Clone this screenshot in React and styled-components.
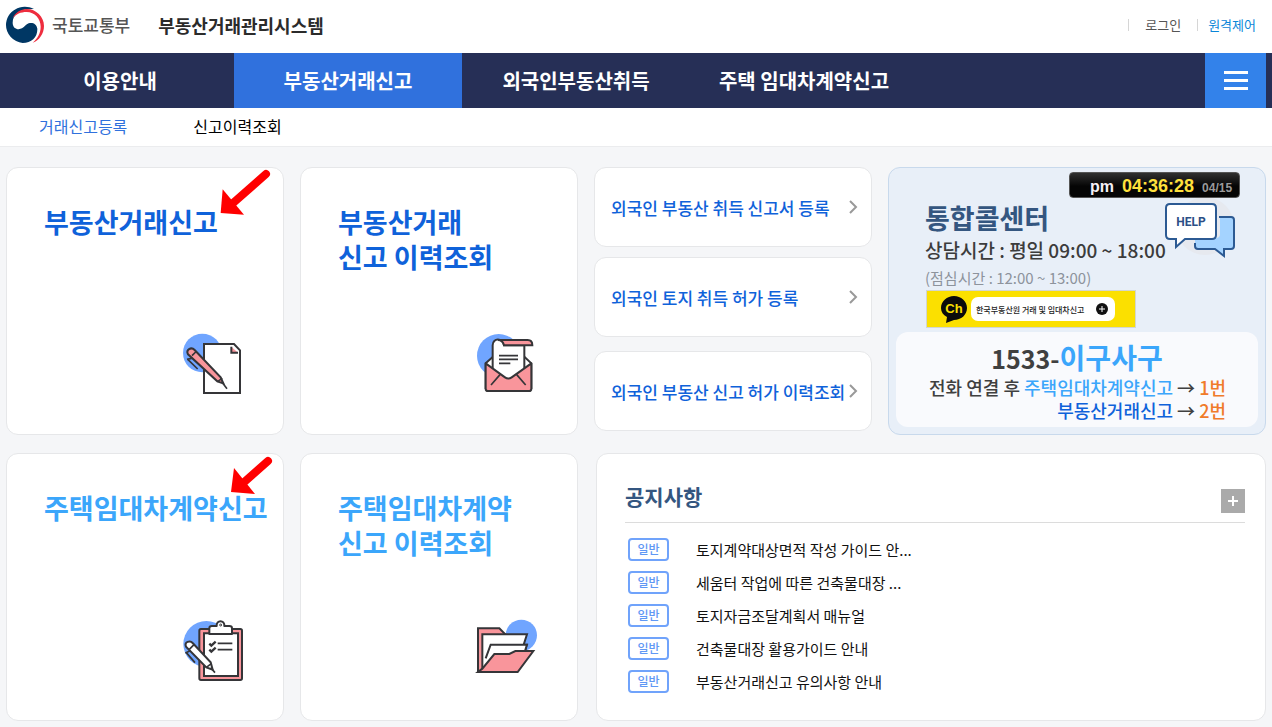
import React from "react";
import styled, { createGlobalStyle } from "styled-components";

const Global = createGlobalStyle`
  * { box-sizing: border-box; }
  body {
    margin: 0;
    background: #f5f6f8;
    color: #111;
    font-family: "Noto Sans CJK KR", "Noto Sans", sans-serif;
  }
  a { color: inherit; text-decoration: none; }
  h1, h2, p, ul { margin: 0; padding: 0; }
  ul { list-style: none; }
  button { border: 0; padding: 0; font: inherit; cursor: pointer; }
`;

const Header = styled.header`
  display: flex;
  align-items: center;
  height: 53px;
  padding: 0 16px 4px 5px;
  background: #fff;
`;
const Ministry = styled.a`
  display: flex;
  align-items: center;
  gap: 7px;
  color: #555;
  font-size: 17px;
  font-weight: 500;
  line-height: 24px;
`;
const SystemName = styled.h1`
  margin-left: 28px;
  color: #2b2b2b;
  font-size: 18px;
  font-weight: 700;
  line-height: 24px;
`;
const Utilities = styled.nav`
  display: flex;
  align-items: center;
  margin-left: auto;
`;
const Utility = styled.a`
  display: flex;
  align-items: center;
  color: ${(p) => (p.$accent ? "#0a86d8" : "#555")};
  font-size: 13px;
  line-height: 18px;
  & + & { margin-left: 16px; }
  &::before {
    content: "";
    height: 12px;
    margin-right: ${(p) => (p.$accent ? 10 : 16)}px;
    border-left: 1px solid #d6d6d6;
  }
`;

const MainNav = styled.nav`
  display: flex;
  height: 55px;
  padding: 0 6px;
  background: #262f56;
`;
const NavItem = styled.a`
  flex: 0 1 228px;
  display: flex;
  align-items: center;
  justify-content: center;
  background: ${(p) => (p.$active ? "#3071dd" : "transparent")};
  color: #fff;
  font-size: 20px;
  font-weight: 700;
  white-space: nowrap;
`;
const MenuButton = styled.button`
  display: flex;
  flex-direction: column;
  align-items: center;
  justify-content: center;
  gap: 5px;
  width: 61px;
  margin-left: auto;
  background: #3382ea;
`;
const MenuBar = styled.span`
  width: 24px;
  height: 3px;
  background: #fff;
`;
const SubNav = styled.nav`
  display: flex;
  align-items: center;
  gap: 66px;
  height: 39px;
  padding: 0 39px 2px;
  border-bottom: 1px solid #ebecee;
  background: #fff;
`;
const SubItem = styled.a`
  color: ${(p) => (p.$active ? "#3071dd" : "#000")};
  font-size: 16px;
  line-height: 24px;
`;

const Main = styled.main`
  display: grid;
  gap: 18px;
  padding: 20px 6px 6px;
`;
const TopRow = styled.div`
  display: grid;
  grid-template-columns: 278fr 278fr 278fr 378fr;
  gap: 16px;
  min-height: 268px;
`;
const BottomRow = styled.div`
  display: grid;
  grid-template-columns: 572fr 670fr;
  gap: 18px;
  min-height: 268px;
`;
const Pair = styled.div`
  display: grid;
  grid-template-columns: 1fr 1fr;
  gap: 16px;
`;

const Panel = styled.section`
  border: 1px solid #e6e7e9;
  border-radius: 12px;
  background: #fff;
`;
const Service = styled(Panel).attrs({ as: "a" })`
  position: relative;
  display: flex;
  flex-direction: column;
  justify-content: space-between;
  padding: 36px 0 38px 37px;
`;
const ServiceTitle = styled.h2`
  color: ${(p) => (p.$light ? "#3ba6fb" : "#0f62da")};
  font-size: 27px;
  font-weight: 700;
  line-height: 35px;
  white-space: nowrap;
`;
const ServiceIcon = styled.svg`
  align-self: flex-end;
  width: 64px;
  height: 64px;
  margin-right: 38px;
  fill: none;
  stroke: #353538;
  stroke-width: 6;
`;
const Pointer = styled.svg`
  position: absolute;
  left: ${(p) => p.$left}px;
  top: ${(p) => p.$top}px;
`;

const Links = styled.div`
  display: flex;
  flex-direction: column;
  gap: 14px;
`;
const LinkGroup = styled.div`
  display: flex;
  flex-direction: column;
  gap: 10px;
`;
const LinkCard = styled(Panel).attrs({ as: "a" })`
  display: flex;
  align-items: center;
  justify-content: space-between;
  height: 80px;
  padding: 0 13px 0 16px;
  color: #0f62da;
  font-size: 17px;
  font-weight: 500;
  white-space: nowrap;
`;

const CallCenter = styled(Panel)`
  position: relative;
  display: flex;
  flex-direction: column;
  padding: 33px 7px 7px;
  border-color: #c8d9ec;
  background: #e8eff8;
`;
const CallInfo = styled.div`
  padding-left: 29px;
`;
const CallTitle = styled.h2`
  color: #345680;
  font-size: 27px;
  font-weight: 700;
  line-height: 34px;
`;
const Hours = styled.p`
  color: #3c3c3c;
  font-size: 19px;
  font-weight: 500;
  line-height: 30px;
  white-space: nowrap;
`;
const Lunch = styled.p`
  color: #8d939c;
  font-size: 15px;
  font-weight: 400;
  line-height: 25px;
`;
const KakaoBanner = styled.a`
  display: flex;
  align-items: center;
  gap: 3px;
  width: 210px;
  height: 38px;
  margin-left: 1px;
  padding-left: 14px;
  border: 1px solid #d3d6cf;
  background: #fbe000;
`;
const KakaoLabel = styled.span`
  display: flex;
  align-items: center;
  justify-content: space-between;
  width: 144px;
  height: 24px;
  padding: 0 7px 0 5px;
  border-radius: 7px;
  background: #fff;
  color: #222;
  font-size: 8px;
  font-weight: 500;
  white-space: nowrap;
`;
const PhoneBox = styled.div`
  margin-top: 4px;
  padding: 7px 32px 5px;
  border-radius: 12px;
  background: #f9fafd;
  color: #404040;
`;
const Phone = styled.p`
  font-size: 25px;
  font-weight: 700;
  line-height: 36px;
  text-align: center;
`;
const PhoneWord = styled.span`
  color: #3ba6fb;
  font-size: 28px;
  line-height: 36px;
`;
const Extension = styled.p`
  font-size: 18px;
  font-weight: 500;
  line-height: 23px;
  text-align: right;
  white-space: nowrap;
`;
const Tone = styled.span`
  color: ${(p) => p.$color};
`;
const Clock = styled.div`
  position: absolute;
  top: 4px;
  right: 25px;
  display: flex;
  align-items: baseline;
  gap: 8px;
  width: 171px;
  height: 26px;
  padding-left: 20px;
  border: 1px solid #555;
  border-radius: 4px;
  background: linear-gradient(#303030, #050505 55%);
  color: #f4f0f4;
  font-family: "Liberation Sans", sans-serif;
  font-size: 16px;
  font-weight: 700;
  line-height: 26px;
`;
const Time = styled.span`
  color: #ffe13c;
  font-size: 18px;
`;
const Day = styled.span`
  color: #9a9a9a;
  font-size: 12px;
`;
const HelpIcon = styled.svg`
  position: absolute;
  top: 28px;
  right: 27px;
`;

const Notices = styled(Panel)`
  padding: 28px 20px 20px 28px;
`;
const NoticeHead = styled.div`
  display: flex;
  align-items: flex-end;
  justify-content: space-between;
  height: 41px;
  padding-bottom: 9px;
  border-bottom: 1px solid #dcdcdc;
`;
const NoticeTitle = styled.h2`
  color: #345680;
  font-size: 21px;
  font-weight: 700;
  line-height: 34px;
`;
const MoreButton = styled.button`
  display: grid;
  place-items: center;
  width: 24px;
  height: 24px;
  background: #aaa;
`;
const NoticeList = styled.ul`
  padding: 10px 0 0 3px;
`;
const Notice = styled.li`
  display: flex;
  align-items: center;
  gap: 27px;
  height: 33px;
  font-size: 15px;
`;
const Tag = styled.span`
  width: 41px;
  height: 23px;
  border: 2px solid #70a3fb;
  border-radius: 4px;
  color: #5f98f5;
  font-size: 12px;
  font-weight: 500;
  line-height: 18px;
  text-align: center;
`;

const PINK = "#f9959b";
const BLUE = "#70a5ff";

const Emblem = () => (
  <svg width="40" height="38" viewBox="15 18 120 114" aria-hidden="true">
    <path fill="#003764" d="M102 27A57 54 0 0 0 18 75A56 54 0 0 0 68 129C95 129 113 112 112 86C110 72 98 66 86 70C78 73 74 80 66 85C54 91 38 86 38 68C38 45 60 30 80 28Z" />
    <path fill="#ee2d3e" d="M38 55C45 38 62 27 80 27C108 27 132 50 132 78C132 100 118 122 98 128C112 116 122 100 122 80C122 56 104 36 80 36C62 36 48 42 38 55Z" />
  </svg>
);

const ContractIcon = () => (
  <ServiceIcon viewBox="33 36 192 192" aria-hidden="true">
    <circle cx="97" cy="99" r="58" fill={BLUE} stroke="none" />
    <path fill="#fff" d="M102 72H192L210 91V219H102Z" />
    <path fill={PINK} d="M184 80V98H204" />
    <path fill={PINK} d="M54 103C47 90 63 79 74 90L152 172L160 190L142 184Z" />
    <path d="M66 107L77 96M142 185L157 175M155 185L171 206M51 118L65 115M54 119L83 147" strokeWidth="5" />
  </ServiceIcon>
);

const LetterIcon = () => (
  <ServiceIcon viewBox="30 36 192 192" aria-hidden="true">
    <circle cx="101" cy="107" r="65" fill={BLUE} stroke="none" />
    <path fill="#fff" d="M62 130L84 110H178L199 130V204H62Z" />
    <path fill="#fff" d="M83 158V76C83 52 114 54 117 76H178V158L130 182Z" />
    <path fill={PINK} d="M99 60H188C198 60 202 67 202 76H117C115 67 109 60 99 60Z" />
    <path fill={PINK} strokeLinejoin="round" d="M62 130L120 172Q130 179 140 172L199 130V206Q199 213 192 213H69Q62 213 62 206Z" />
    <path d="M78 195L105 164M182 195L155 164M102 107H159M102 118H159M102 130H136" strokeWidth="5" />
  </ServiceIcon>
);

const ChecklistIcon = () => (
  <ServiceIcon viewBox="33 24 192 192" aria-hidden="true">
    <circle cx="109" cy="102" r="69" fill={BLUE} stroke="none" />
    <rect x="88" y="57" width="128" height="153" rx="5" fill={PINK} />
    <path fill="#fff" d="M102 70H204V198H102Z" />
    <path fill="#fff" strokeLinejoin="round" d="M118 72V55Q118 48 126 48H140C138 29 165 29 163 48H178Q186 48 186 55V72Z" />
    <circle cx="152" cy="45" r="3" strokeWidth="3" />
    <path d="M118 101L124 107L137 95M118 119L124 125L137 113" strokeWidth="7" />
    <path d="M143 100H187M143 119H187" strokeWidth="5" />
    <path fill="#fff" d="M48 110C42 96 60 90 68 99L122 157L128 179L109 172Z" />
    <path d="M58 118L72 104M109 172L124 161M122 173L135 188M46 129L61 122M49 128L75 158" strokeWidth="5" />
  </ServiceIcon>
);

const FolderIcon = () => (
  <ServiceIcon viewBox="30 24 192 192" aria-hidden="true">
    <circle cx="169" cy="76" r="47" fill={BLUE} stroke="none" />
    <path fill={PINK} d="M39 186V55H103L121 73V186Z" />
    <path fill="#fff" d="M52 176V73H186L176 104H185L178 130L100 176Z" />
    <path fill="#fff" d="M62 145L77 104H186L180 123L90 170" />
    <path fill={PINK} d="M39 186L52 176L88 132H133L151 123H205L158 186Z" />
  </ServiceIcon>
);

const Chevron = () => (
  <svg width="10" height="14" viewBox="0 0 10 14" fill="none" stroke="#999" strokeWidth="2" aria-hidden="true">
    <path d="M2 1L8 7L2 13" />
  </svg>
);

const notices = [
  "토지계약대상면적 작성 가이드 안...",
  "세움터 작업에 따른 건축물대장 ...",
  "토지자금조달계획서 매뉴얼",
  "건축물대장 활용가이드 안내",
  "부동산거래신고 유의사항 안내",
];

export default function App() {
  return (
    <>
      <Global />
      <Header>
        <Ministry href="#"><Emblem />국토교통부</Ministry>
        <SystemName>부동산거래관리시스템</SystemName>
        <Utilities>
          <Utility href="#">로그인</Utility>
          <Utility href="#" $accent>원격제어</Utility>
        </Utilities>
      </Header>
      <MainNav>
        <NavItem href="#">이용안내</NavItem>
        <NavItem href="#" $active>부동산거래신고</NavItem>
        <NavItem href="#">외국인부동산취득</NavItem>
        <NavItem href="#">주택 임대차계약신고</NavItem>
        <MenuButton aria-label="전체메뉴"><MenuBar /><MenuBar /><MenuBar /></MenuButton>
      </MainNav>
      <SubNav>
        <SubItem href="#" $active>거래신고등록</SubItem>
        <SubItem href="#">신고이력조회</SubItem>
      </SubNav>
      <Main>
        <TopRow>
          <Service href="#">
            <ServiceTitle>부동산거래신고</ServiceTitle>
            <ContractIcon />
            <Pointer $left={213} $top={0} width="52" height="48" viewBox="660 24 156 144" aria-hidden="true">
              <path d="M798 42L695 133" stroke="#f00" strokeWidth="24" strokeLinecap="round" />
              <path d="M668 88L662 159L732 164Z" fill="#f00" />
            </Pointer>
          </Service>
          <Service href="#">
            <ServiceTitle>부동산거래<br />신고 이력조회</ServiceTitle>
            <LetterIcon />
          </Service>
          <Links>
            <LinkGroup>
              <LinkCard href="#">외국인 부동산 취득 신고서 등록<Chevron /></LinkCard>
              <LinkCard href="#">외국인 토지 취득 허가 등록<Chevron /></LinkCard>
            </LinkGroup>
            <LinkGroup>
              <LinkCard href="#">외국인 부동산 신고 허가 이력조회<Chevron /></LinkCard>
            </LinkGroup>
          </Links>
          <CallCenter>
            <CallInfo>
              <CallTitle>통합콜센터</CallTitle>
              <Hours>상담시간 : 평일 09:00 ~ 18:00</Hours>
              <Lunch>(점심시간 : 12:00 ~ 13:00)</Lunch>
              <KakaoBanner href="#">
                <svg width="27" height="28" viewBox="0 0 27 28" aria-hidden="true">
                  <path fill="#0b0b0b" d="M13 1C20 1 26 6 26 13S20 25 13 25L5 28L6 22C2 20 0 17 0 13C0 6 6 1 13 1Z" />
                  <text x="13" y="18" textAnchor="middle" fill="#fbe000" fontFamily="Liberation Sans, sans-serif" fontWeight="700" fontSize="13">Ch</text>
                </svg>
                <KakaoLabel>
                  한국부동산원 거래 및 임대차신고
                  <svg width="12" height="12" viewBox="0 0 12 12" aria-hidden="true">
                    <circle cx="6" cy="6" r="6" fill="#111" />
                    <path d="M3 6H9M6 3V9" stroke="#fff" />
                  </svg>
                </KakaoLabel>
              </KakaoBanner>
            </CallInfo>
            <PhoneBox>
              <Phone>1533-<PhoneWord>이구사구</PhoneWord></Phone>
              <Extension>전화 연결 후 <Tone $color="#3ba6fb">주택임대차계약신고</Tone> → <Tone $color="#f07b2a">1번</Tone></Extension>
              <Extension><Tone $color="#0f62da">부동산거래신고</Tone> → <Tone $color="#f07b2a">2번</Tone></Extension>
            </PhoneBox>
            <HelpIcon width="76" height="64" viewBox="0 0 76 64" aria-hidden="true">
              <circle cx="43" cy="30" r="29" fill="#e6e9ef" />
              <path d="M58 21H69Q72 21 72 24V50Q72 53 69 53H62V60L53 53H36Q33 53 33 50V42H54Q58 42 58 38Z" fill="#a4d3ff" />
              <path d="M57 21H69Q72 21 72 24V50Q72 53 69 53H62V60L53 53H36Q33 53 33 50V47" fill="none" stroke="#2c5a93" strokeWidth="2" />
              <path d="M8 8H50Q54 8 54 12V39Q54 43 50 43H23L14 51V43H8Q4 43 4 39V12Q4 8 8 8Z" fill="#fff" stroke="#2c5a93" strokeWidth="2" />
              <text x="29" y="30" textAnchor="middle" fill="#2c4f86" fontFamily="Roboto, Liberation Sans, sans-serif" fontWeight="700" fontSize="12">HELP</text>
            </HelpIcon>
            <Clock><span>pm</span><Time>04:36:28</Time><Day>04/15</Day></Clock>
          </CallCenter>
        </TopRow>
        <BottomRow>
          <Pair>
            <Service href="#">
              <ServiceTitle $light>주택임대차계약신고</ServiceTitle>
              <ChecklistIcon />
              <Pointer $left={223} $top={1} width="44" height="40" viewBox="0 0 44 40" aria-hidden="true">
                <path d="M38 6L12 29" stroke="#f00" strokeWidth="8" strokeLinecap="round" />
                <path d="M4 13L1 37L25 39Z" fill="#f00" />
              </Pointer>
            </Service>
            <Service href="#">
              <ServiceTitle $light>주택임대차계약<br />신고 이력조회</ServiceTitle>
              <FolderIcon />
            </Service>
          </Pair>
          <Notices>
            <NoticeHead>
              <NoticeTitle>공지사항</NoticeTitle>
              <MoreButton aria-label="공지사항 더보기">
                <svg width="12" height="12" viewBox="0 0 12 12" stroke="#fff" strokeWidth="2" aria-hidden="true">
                  <path d="M1 6H11M6 1V11" />
                </svg>
              </MoreButton>
            </NoticeHead>
            <NoticeList>
              {notices.map((title) => (
                <Notice key={title}><Tag>일반</Tag><a href="#">{title}</a></Notice>
              ))}
            </NoticeList>
          </Notices>
        </BottomRow>
      </Main>
    </>
  );
}
